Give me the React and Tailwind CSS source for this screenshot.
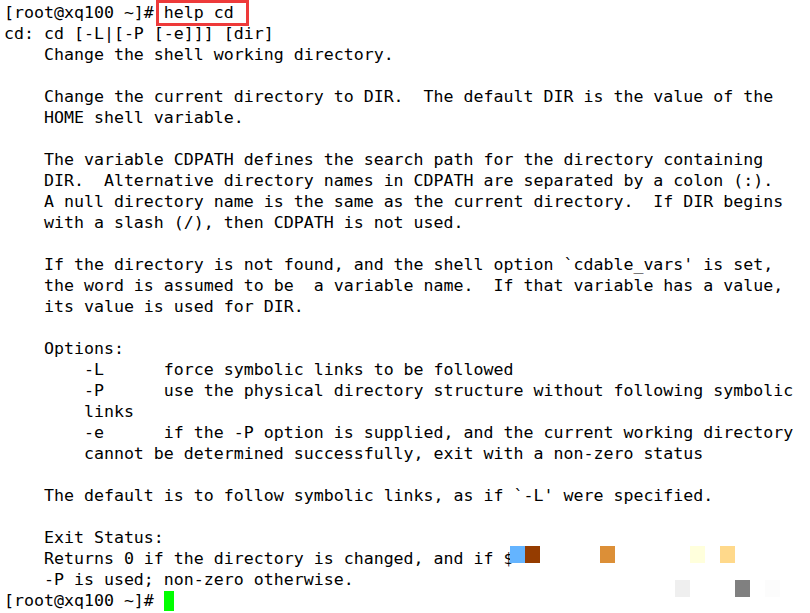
const lines = [
  "[root@xq100 ~]# help cd",
  "cd: cd [-L|[-P [-e]]] [dir]",
  "    Change the shell working directory.",
  "",
  "    Change the current directory to DIR.  The default DIR is the value of the",
  "    HOME shell variable.",
  "",
  "    The variable CDPATH defines the search path for the directory containing",
  "    DIR.  Alternative directory names in CDPATH are separated by a colon (:).",
  "    A null directory name is the same as the current directory.  If DIR begins",
  "    with a slash (/), then CDPATH is not used.",
  "",
  "    If the directory is not found, and the shell option `cdable_vars' is set,",
  "    the word is assumed to be  a variable name.  If that variable has a value,",
  "    its value is used for DIR.",
  "",
  "    Options:",
  "        -L      force symbolic links to be followed",
  "        -P      use the physical directory structure without following symbolic",
  "        links",
  "        -e      if the -P option is supplied, and the current working directory",
  "        cannot be determined successfully, exit with a non-zero status",
  "",
  "    The default is to follow symbolic links, as if `-L' were specified.",
  "",
  "    Exit Status:",
  "    Returns 0 if the directory is changed, and if $",
  "    -P is used; non-zero otherwise.",
];

const blocks = [
  { x: 510, y: 546, c: "bg-[#64b4ff]" },
  { x: 525, y: 546, c: "bg-[#953c00]" },
  { x: 600, y: 546, c: "bg-[#dc8f37]" },
  { x: 690, y: 546, c: "bg-[#ffffdc]" },
  { x: 720, y: 546, c: "bg-[#ffd98b]" },
  { x: 675, y: 580, c: "bg-[#efefef]" },
  { x: 735, y: 580, c: "bg-[#808080]" },
  { x: 765, y: 580, c: "bg-[#fcfcfc]" },
];

export default function App() {
  return (
    <div className="relative w-[810px] h-[613px] bg-white overflow-hidden">
      <div className="pl-[4px] pt-[2px] text-black whitespace-pre font-['DejaVu_Sans_Mono',monospace] text-[16.6px] leading-[21px]">
        {lines.map((l, i) => (
          <div key={i} className="h-[21px]">
            {l}
          </div>
        ))}
        <div className="h-[21px] flex items-center">
          <span>[root@xq100 ~]# </span>
          <span className="inline-block w-[10px] h-[20px] bg-[#00ff00]" />
        </div>
      </div>
      <div className="absolute left-[156px] top-0 w-[93px] h-[26px] border-[3px] border-[#ee3a3a]" />
      {blocks.map((b, i) => (
        <div
          key={i}
          className={"absolute w-[15px] h-[17px] " + b.c}
          style={{ left: b.x, top: b.y }}
        />
      ))}
    </div>
  );
}
